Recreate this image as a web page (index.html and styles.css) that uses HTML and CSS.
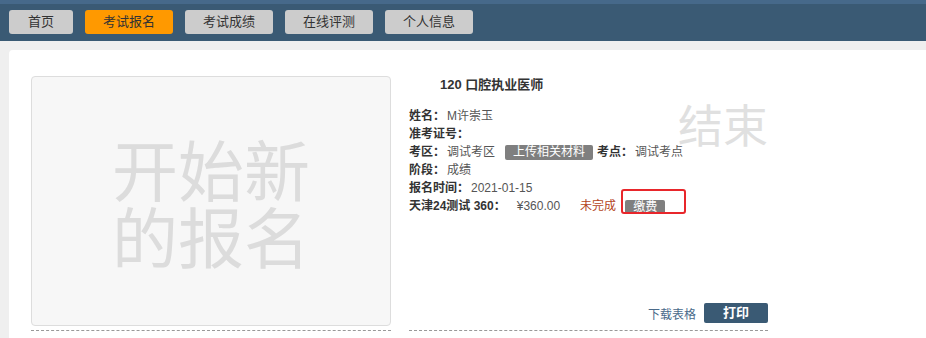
FILE: index.html
```html
<!DOCTYPE html>
<html lang="zh-CN">
<head>
    <meta charset="UTF-8">
    <meta name="viewport" content="width=device-width, initial-scale=1.0">
    <link rel="stylesheet" href="styles.css">
</head>
<body>
    <div class="header">
        <a class="nav-btn nav-home">首页</a>
        <a class="nav-btn active">考试报名</a>
        <a class="nav-btn">考试成绩</a>
        <a class="nav-btn">在线评测</a>
        <a class="nav-btn">个人信息</a>
    </div>

    <div class="card">
        <div class="item">
            <div class="new-box">
                <span class="new-line">开始新</span>
                <span class="new-line">的报名</span>
            </div>
        </div>

        <div class="item detail">
            <div class="stamp">结束</div>
            <div class="title">120 口腔执业医师</div>
            <div class="rows">
                <div class="row"><span class="label">姓名：</span><span class="value">M许崇玉</span></div>
                <div class="row"><span class="label">准考证号：</span></div>
                <div class="row">
                    <span class="label">考区：</span><span class="value">调试考区</span>
                    <span class="btn-grey upload">上传相关材料</span>
                    <span class="label">考点：</span><span class="value">调试考点</span>
                </div>
                <div class="row"><span class="label">阶段：</span><span class="value">成绩</span></div>
                <div class="row"><span class="label">报名时间：</span><span class="value">2021-01-15</span></div>
                <div class="row">
                    <span class="label">天津24测试 360：</span><span class="value price">¥360.00</span>
                    <span class="status">未完成</span>
                    <span class="btn-grey pay">缴费</span>
                </div>
            </div>
            <div class="mark"></div>
            <div class="actions">
                <a class="download">下载表格</a>
                <a class="btn-print">打印</a>
            </div>
        </div>
    </div>
</body>
</html>
```

FILE: styles.css
```css
body {
    margin: 0;
    background: #efefef;
    font-family: "Liberation Sans", "Noto Sans CJK SC", sans-serif;
    font-size: 12px;
    color: #333;
    overflow: hidden;
}
.header {
    display: flex;
    gap: 12px;
    background: #3a5a74;
    border-top: 4px solid #46698a;
    padding: 6px 9px 7px;
}
.nav-btn {
    width: 88px;
    height: 24px;
    line-height: 24px;
    text-align: center;
    background: #cccccc;
    border-radius: 3px;
    font-size: 13px;
    color: #333;
}
.nav-home {
    width: 64px;
}
.nav-btn.active {
    background: #ff9900;
}
.card {
    display: flex;
    gap: 18px;
    margin: 9px 0 0 9px;
    padding: 26px 22px 40px;
    background: #fff;
    border-radius: 4px 0 0 0;
}
.item {
    width: 360px;
    padding-bottom: 4px;
    border-bottom: 1px dashed #999;
}
.new-box {
    box-sizing: border-box;
    height: 250px;
    display: flex;
    flex-direction: column;
    align-items: center;
    justify-content: center;
    background: #f7f7f7;
    border: 1px solid #dddddd;
    border-radius: 4px;
    font-family: "Noto Sans CJK SC", sans-serif;
    font-size: 66px;
    color: #dcdcdc;
}
.new-line {
    display: block;
    height: 67px;
    line-height: 67px;
}
.detail {
    width: 359px;
    height: 250px;
    position: relative;
    display: flex;
    flex-direction: column;
}
.stamp {
    position: absolute;
    left: 269px;
    top: 25px;
    font-family: "Noto Sans CJK SC", sans-serif;
    font-size: 45px;
    line-height: 46px;
    color: #e0e0e0;
}
.title {
    padding-left: 31px;
    font-size: 13px;
    font-weight: bold;
    line-height: 18px;
}
.rows {
    margin-top: 13px;
    position: relative;
}
.row {
    line-height: 18px;
    height: 18px;
    display: flex;
    align-items: center;
}
.label {
    font-weight: bold;
    color: #333;
}
.value {
    color: #555;
    margin-left: 2px;
}
.btn-grey {
    background: #7f7f7f;
    color: #fff;
    border-radius: 2px;
}
.upload {
    height: 15px;
    line-height: 15px;
    padding: 0 8px;
    margin: 0 4px 0 10px;
}
.price {
    margin-left: 11px;
}
.status {
    color: #b4441b;
    margin-left: 20px;
}
.pay {
    height: 14px;
    line-height: 14px;
    padding: 0 8px;
    margin: 2px 0 0 9px;
}
.mark {
    position: absolute;
    left: 212px;
    top: 113px;
    width: 61px;
    height: 21px;
    border: 2px solid #e8262b;
    border-radius: 3px;
}
.actions {
    margin-top: auto;
    margin-bottom: 3px;
    display: flex;
    justify-content: flex-end;
    align-items: center;
    gap: 8px;
}
.download {
    color: #4a6a8a;
}
.btn-print {
    width: 64px;
    height: 20px;
    line-height: 20px;
    text-align: center;
    background: #3a5a74;
    color: #fff;
    font-size: 13px;
    font-weight: bold;
    border-radius: 2px;
}
```
